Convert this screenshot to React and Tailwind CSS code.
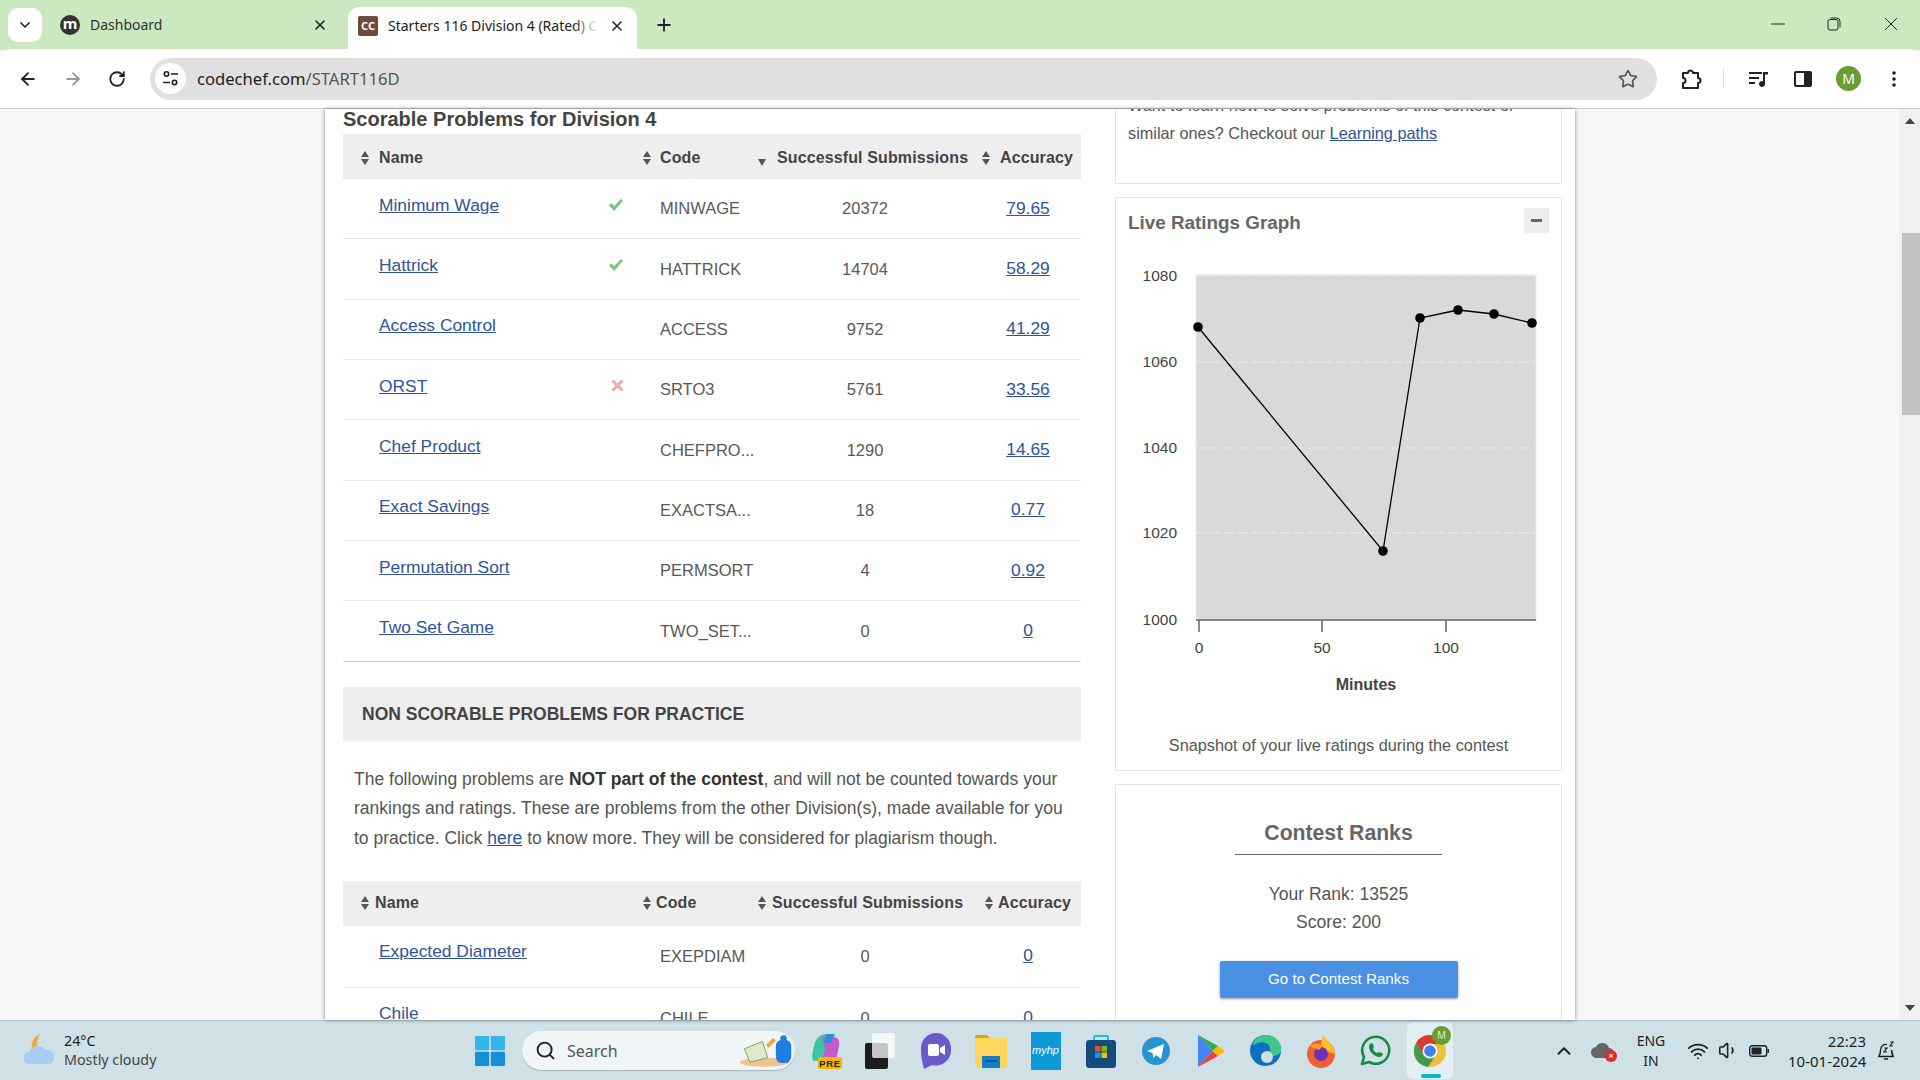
import {
  ArrowLeft, ArrowRight, RotateCw, Star, X, Plus, ChevronDown, ChevronUp, Search, Wifi, Volume1,
} from 'lucide-react'

const font = { sys: 'font-["Noto_Sans",sans-serif]' }

const scorable = [
  { name: 'Minimum Wage', status: 'ok', code: 'MINWAGE', subs: '20372', acc: '79.65' },
  { name: 'Hattrick', status: 'ok', code: 'HATTRICK', subs: '14704', acc: '58.29' },
  { name: 'Access Control', code: 'ACCESS', subs: '9752', acc: '41.29' },
  { name: 'ORST', status: 'bad', code: 'SRTO3', subs: '5761', acc: '33.56' },
  { name: 'Chef Product', code: 'CHEFPRO...', subs: '1290', acc: '14.65' },
  { name: 'Exact Savings', code: 'EXACTSA...', subs: '18', acc: '0.77' },
  { name: 'Permutation Sort', code: 'PERMSORT', subs: '4', acc: '0.92' },
  { name: 'Two Set Game', code: 'TWO_SET...', subs: '0', acc: '0' },
]

const practice = [
  { name: 'Expected Diameter', code: 'EXEPDIAM', subs: '0', acc: '0' },
  { name: 'Chile', code: 'CHILE', subs: '0', acc: '0' },
]

function SortIcon({ down }) {
  if (down) {
    return (
      <svg width="8" height="8" viewBox="0 0 8 8" className="mt-[7px] shrink-0">
        <path d="M0 1h8L4 8z" fill="#555" />
      </svg>
    )
  }
  return (
    <svg width="8" height="14" viewBox="0 0 8 14" className="shrink-0">
      <path d="M4 0l4 6H0zM4 14L0 8h8z" fill="#555" />
    </svg>
  )
}

function Status({ status }) {
  if (status === 'ok') {
    return (
      <svg width="16" height="14" viewBox="0 0 16 14">
        <path d="M1 7.500l2.500-2.200 2.600 3L12.800 1 15 2.800 6.200 13z" fill="#7cc47f" />
      </svg>
    )
  }
  if (status === 'bad') {
    return (
      <svg width="13" height="13" viewBox="0 0 13 13">
        <path d="M1.500 1.500l10 10M11.500 1.500l-10 10" stroke="#efa7a7" strokeWidth="3" />
      </svg>
    )
  }
  return null
}

function HeaderCell({ className, down, children, gap }) {
  return (
    <div className={`flex items-center whitespace-nowrap ${className}`}>
      <SortIcon down={down} />
      <span className={gap}>{children}</span>
    </div>
  )
}

function Row({ p, tall }) {
  return (
    <div className={`flex items-center border-b border-[#e8e8e8] text-[16.5px] text-[#595959] ${tall ? 'h-[62px]' : 'h-[60.35px]'}`}>
      <div className={`w-[297px] pl-[36px] pr-[16px] flex items-center justify-between text-[17.4px] ${tall ? 'pb-[10px]' : 'pb-[8px]'}`}>
        <a className="underline text-[#2f5597]">{p.name}</a>
        <Status status={p.status} />
      </div>
      <div className="w-[115px] pl-[20px] whitespace-nowrap">{p.code}</div>
      <div className="w-[220px] text-center">{p.subs}</div>
      <div className="w-[106px] text-center text-[17.4px] pb-[2px]">
        <a className="underline text-[#2f5597]">{p.acc}</a>
      </div>
    </div>
  )
}

function ProblemsColumn() {
  return (
    <div className="w-[738px] shrink-0 font-['Liberation_Sans',sans-serif]">
      <h2 className="h-[25px] text-[20px] leading-[21px] font-bold text-[#444]">Scorable Problems for Division 4</h2>

      <div className="flex items-center h-[45px] pt-[3px] bg-[#eeeeee] text-[16px] font-bold text-[#444] tracking-[0.12px]">
        <HeaderCell className="w-[297px] pl-[18px]" gap="ml-[10px]">Name</HeaderCell>
        <HeaderCell className="w-[115px] pl-[3px]" gap="ml-[9px]">Code</HeaderCell>
        <HeaderCell className="w-[220px] pl-[3px]" down gap="ml-[11px]">Successful Submissions</HeaderCell>
        <HeaderCell className="w-[106px] pl-[7px]" gap="ml-[10px]">Accuracy</HeaderCell>
      </div>
      {scorable.map((p) => <Row key={p.name} p={p} />)}
      <div className="h-px -mt-px bg-[#cccccc]" />

      <div className="mt-[25px] h-[54px] flex items-center pl-[19px] bg-[#eeeeee] text-[17.5px] font-bold text-[#444]">
        NON SCORABLE PROBLEMS FOR PRACTICE
      </div>

      <p className="mt-[24px] pl-[11px] text-[17.5px] leading-[29.7px] text-[#555] whitespace-nowrap">
        The following problems are <b className="text-[#333]">NOT part of the contest</b>, and will not be counted towards your<br />
        rankings and ratings. These are problems from the other Division(s), made available for you<br />
        to practice. Click <a className="underline text-[#2f5597]">here</a> to know more. They will be considered for plagiarism though.
      </p>

      <div className="mt-[27px] flex items-center h-[45px] bg-[#eeeeee] text-[16px] font-bold text-[#444] tracking-[0.12px]">
        <HeaderCell className="w-[297px] pl-[18px]" gap="ml-[6px]">Name</HeaderCell>
        <HeaderCell className="w-[115px] pl-[3px]" gap="ml-[5px]">Code</HeaderCell>
        <HeaderCell className="w-[220px] pl-[3px]" gap="ml-[6px]">Successful Submissions</HeaderCell>
        <HeaderCell className="w-[106px] pl-[10px]" gap="ml-[5px]">Accuracy</HeaderCell>
      </div>
      {practice.map((p) => <Row key={p.name} p={p} tall />)}
    </div>
  )
}

function RatingsChart() {
  const pts = [[1198, 327], [1383, 551], [1420, 318], [1458, 310], [1494, 314], [1532, 323]]
  const grid = [275, 362, 448, 533]
  const yLabels = [['1080', 276], ['1060', 362], ['1040', 448], ['1020', 533], ['1000', 620]]
  const xLabels = [['0', 1199], ['50', 1322], ['100', 1446]]
  return (
    <svg width="445" height="450" viewBox="1116 245 445 450" className="block">
      <rect x="1196" y="275" width="340" height="345" fill="#d9d9d9" stroke="#ececec" />
      {grid.map((y) => (
        <line key={y} x1="1196" x2="1536" y1={y} y2={y} stroke="#ececec" strokeWidth={y === 275 ? 2 : 1} strokeDasharray="10 4" />
      ))}
      <line x1="1196" x2="1536" y1="620" y2="620" stroke="#666" strokeWidth="1.500" />
      {xLabels.map(([t, x]) => <line key={t} x1={x} x2={x} y1="620" y2="632" stroke="#666" strokeWidth="1.500" />)}
      <polyline points={pts.map((p) => p.join(',')).join(' ')} fill="none" stroke="#000" strokeWidth="1.300" />
      {pts.map(([x, y]) => <circle key={x} cx={x} cy={y} r="4.800" fill="#000" />)}
      <g fontFamily="Liberation Sans, sans-serif" fontSize="15.500" fill="#444">
        {yLabels.map(([t, y]) => <text key={t} x="1177" y={y + 5} textAnchor="end">{t}</text>)}
        {xLabels.map(([t, x]) => <text key={t} x={x} y="653" textAnchor="middle">{t}</text>)}
        <text x="1366" y="690" textAnchor="middle" fontWeight="700" fontSize="16">Minutes</text>
      </g>
    </svg>
  )
}

function SideColumn() {
  return (
    <div className="w-[447px] shrink-0 ml-[34px] font-['Liberation_Sans',sans-serif] text-[#555]">
      <div className="-mt-[19px] h-[94px] border border-[#e6e6e6] pl-[12px] text-[16.27px] leading-[28px] whitespace-nowrap">
        Want to learn how to solve problems of this contest or<br />
        similar ones? Checkout our <a className="underline text-[#2f5597]">Learning paths</a>
      </div>

      <div className="mt-[13px] h-[574px] border border-[#e6e6e6]">
        <div className="h-[47px] flex items-start pl-[12px] pr-[12px] pt-[10px]">
          <h3 className="flex-1 text-[18.85px] leading-[30px] font-bold text-[#666]">Live Ratings Graph</h3>
          <button className="w-[25px] h-[25px] bg-[#eeeeee] flex items-center justify-center">
            <span className="w-[11px] h-[2.500px] bg-[#666]" />
          </button>
        </div>
        <RatingsChart />
        <p className="mt-[38px] text-center text-[16.3px] leading-[24px]">Snapshot of your live ratings during the contest</p>
      </div>

      <div className="mt-[13px] h-[300px] border border-[#e6e6e6] flex flex-col items-center pt-[33px]">
        <h3 className="w-[207px] pb-[6px] border-b border-[#666] text-center text-[21.2px] leading-[30px] font-bold text-[#666]">Contest Ranks</h3>
        <p className="mt-[25px] text-[17.55px] leading-[28px] text-center">Your Rank: 13525<br />Score: 200</p>
        <button className="mt-[25px] w-[238px] h-[37px] rounded-[2px] bg-[#4a90e2] text-white text-[15.2px] shadow-[0_1px_3px_rgba(0,0,0,0.4)]">Go to Contest Ranks</button>
      </div>
    </div>
  )
}

function Tabs() {
  return (
    <div className={`h-[50px] bg-[#cce8c0] flex items-end ${font.sys} text-[14px] text-[#333]`}>
      <div className="self-start mt-[8px] ml-[8px] w-[34px] h-[34px] rounded-[10px] bg-white flex items-center justify-center">
        <ChevronDown size={16} strokeWidth={2.500} color="#222" />
      </div>
      <div className="h-[50px] w-[306px] shrink-0 flex items-center pb-[1px] pl-[18px] pr-[20px]">
        <span className="w-[20px] h-[20px] rounded-full bg-[#333] text-white text-[15px] leading-[17px] font-bold text-center">m</span>
        <span className="ml-[10px] flex-1">Dashboard</span>
        <X size={16} strokeWidth={2.400} color="#222" />
      </div>
      <div className="h-[43px] w-[289px] shrink-0 rounded-t-[12px] bg-white flex items-center pl-[10px] pr-[12px] pb-[6px]">
        <span className="w-[20px] h-[20px] rounded-[2px] bg-[#6b4c38] text-white text-[11px] leading-[20px] font-bold text-center">CC</span>
        <span className="ml-[10px] w-[210px] relative overflow-hidden whitespace-nowrap text-[#222]">
          Starters 116 Division 4 (Rated) C
          <span className="absolute right-0 top-0 bottom-0 w-[24px] bg-gradient-to-r from-transparent to-white" />
        </span>
        <X size={16} strokeWidth={2.400} color="#222" className="ml-auto" />
      </div>
      <div className="self-start mt-[15px] ml-[17px]"><Plus size={20} strokeWidth={2.200} color="#222" /></div>
      <div className="flex-1" />
      <div className="self-start mt-[17px] flex items-center text-[#222]">
        <div className="w-[56px] flex justify-center">
          <svg width="14" height="14" viewBox="0 0 14 14"><path d="M0 7h14" stroke="#222" /></svg>
        </div>
        <div className="w-[56px] flex justify-center">
          <svg width="14" height="14" viewBox="0 0 14 14" fill="none" stroke="#222"><rect x="1" y="2.500" width="10" height="10.500" rx="2" /><path d="M3.500 1h6a3.500 3.500 0 0 1 3.500 3.500v6" /></svg>
        </div>
        <div className="w-[58px] flex justify-center">
          <svg width="14" height="14" viewBox="0 0 14 14"><path d="M1 1l12 12M13 1L1 13" stroke="#222" /></svg>
        </div>
      </div>
    </div>
  )
}

function Toolbar() {
  return (
    <div className={`h-[60px] bg-white border-b border-[#c9c9c9] rounded-t-[10px] -mt-px flex items-center ${font.sys}`}>
      <div className="w-[150px] shrink-0 flex items-center pl-[18px] gap-[25px]">
        <ArrowLeft size={20} strokeWidth={2.200} color="#222" />
        <ArrowRight size={20} strokeWidth={2.200} color="#999" />
        <RotateCw size={18} strokeWidth={2.400} color="#222" />
      </div>
      <div className="w-[1507px] h-[42px] rounded-full bg-[#e0e0e0] flex items-center pl-[5px] pr-[19px]">
        <span className="w-[31px] h-[31px] rounded-full bg-white flex items-center justify-center">
          <svg width="17" height="17" viewBox="0 0 17 17" fill="none" stroke="#222" strokeWidth="1.600">
            <circle cx="4.500" cy="4" r="2.200" /><path d="M9 4h7M1 12.500h7" /><circle cx="12.500" cy="12.500" r="2.200" />
          </svg>
        </span>
        <span className="ml-[11px] pt-[2px] flex-1 text-[16.6px] text-[#222]">codechef.com<span className="text-[#555]">/START116D</span></span>
        <Star size={20} strokeWidth={2} color="#555" />
      </div>
      <div className="flex-1 flex items-center pl-[23px]">
        <svg width="22" height="22" viewBox="0 0 22 22" fill="none" stroke="#222" strokeWidth="2" strokeLinejoin="round">
          <path d="M3 5h5a2.500 2.500 0 0 1 5 0h5v5a2.500 2.500 0 0 1 0 5v5H3v-5a2.500 2.500 0 0 0 0-5z" />
        </svg>
        <span className="ml-[21px] w-px h-[19px] bg-[#cce8c0]" />
        <svg width="22" height="20" viewBox="0 0 22 20" className="ml-[24px]" fill="#222">
          <path d="M1 3h13v2H1zM1 8h10v2H1zM1 13h6v2H1z" /><path d="M15 3h5v2.500h-3V15a3 3 0 1 1-2-2.800z" />
        </svg>
        <svg width="20" height="20" viewBox="0 0 20 20" className="ml-[23px]">
          <rect x="1" y="2" width="18" height="16" rx="2" fill="#222" /><rect x="3" y="4" width="8" height="12" fill="#fff" />
        </svg>
        <span className="ml-[23px] w-[25px] h-[25px] rounded-full bg-[#6a9c32] text-white text-[14px] leading-[25px] text-center">M</span>
        <svg width="4" height="18" viewBox="0 0 4 18" className="ml-[31px]" fill="#222">
          <circle cx="2" cy="3" r="1.800" /><circle cx="2" cy="9" r="1.800" /><circle cx="2" cy="15" r="1.800" />
        </svg>
      </div>
    </div>
  )
}

function Scrollbar() {
  return (
    <div className="w-[21px] shrink-0 bg-[#f0f0f0] flex flex-col items-center">
      <svg width="10" height="6" viewBox="0 0 10 6" className="mt-[9px] shrink-0"><path d="M5 0l5 6H0z" fill="#444" /></svg>
      <div className="mt-[109px] self-end w-[18px] h-[182px] bg-[#c1c1c1]" />
      <div className="flex-1" />
      <svg width="10" height="6" viewBox="0 0 10 6" className="mb-[9px] shrink-0"><path d="M0 0h10L5 6z" fill="#444" /></svg>
    </div>
  )
}

const taskIcons = [
  <svg key="copilot" width="32" height="38" viewBox="0 0 32 38">
    <path d="M4 14C6 4 12 2 18 2h7L21 20c-1 6-4 9-10 9H5C1 29 2 22 4 14z" fill="#3ec3a8" />
    <path d="M12 5h10c6 0 8 3 7 9l-2 10c-1 4-5 5-9 5h-6l3-12z" fill="#c35ac9" />
    <path d="M17 2h7l-3 9h-7z" fill="#2a8fe0" />
    <rect x="8" y="25" width="24" height="12" rx="2" fill="#f5b800" />
    <text x="20" y="34.500" textAnchor="middle" fontSize="9.500" fontWeight="700" fontFamily="Liberation Sans, sans-serif" letterSpacing="0.600" fill="#222">PRE</text>
  </svg>,
  <svg key="taskview" width="32" height="36" viewBox="0 0 32 36">
    <rect x="0" y="10" width="23" height="26" rx="2" fill="#1d1d1d" />
    <rect x="7" y="0" width="23" height="25" rx="2" fill="#ffffff" opacity="0.750" />
  </svg>,
  <svg key="meet" width="30" height="36" viewBox="0 0 30 36">
    <path d="M15 0a15 15 0 0 1 15 15v3A15 15 0 0 1 11 32L3 36c-2-8-3-12-3-20A15 15 0 0 1 15 0z" fill="#6a5bc9" />
    <rect x="7" y="11" width="11" height="12" rx="2" fill="#fff" />
    <path d="M19 15l5-3v10l-5-3z" fill="#fff" />
  </svg>,
  <svg key="folder" width="32" height="34" viewBox="0 0 32 34">
    <path d="M0 3a2 2 0 0 1 2-2h10l3 3H0z" fill="#e2a400" /><rect y="4" width="32" height="30" rx="1" fill="#ffd65c" />
    <rect x="7" y="22" width="18" height="12" fill="#1280c9" /><rect x="10" y="26" width="12" height="2" fill="#0b4f86" />
  </svg>,
  <span key="myhp" className="w-[30px] h-[38px] bg-[#0f97d6] flex items-center justify-center text-white text-[11px] italic font-['Liberation_Sans',sans-serif]">myhp</span>,
  <svg key="store" width="30" height="34" viewBox="0 0 30 34">
    <path d="M8 6V3a1 1 0 0 1 1-1h12a1 1 0 0 1 1 1v3" fill="none" stroke="#27b5e6" strokeWidth="2" />
    <rect y="6" width="30" height="28" rx="3" fill="#144a7c" />
    <rect x="9" y="12" width="5.500" height="5.500" fill="#f25022" /><rect x="15.500" y="12" width="5.500" height="5.500" fill="#7fba00" />
    <rect x="9" y="18.500" width="5.500" height="5.500" fill="#00a4ef" /><rect x="15.500" y="18.500" width="5.500" height="5.500" fill="#ffb900" />
  </svg>,
  <svg key="telegram" width="28" height="28" viewBox="0 0 28 28">
    <circle cx="14" cy="14" r="14" fill="#2794cf" />
    <path d="M5 14l17-7-3 15-5-4-2.500 3-1-5z" fill="#fff" />
  </svg>,
  <svg key="play" width="28" height="34" viewBox="0 0 28 34">
    <path d="M1 1v32l15-16z" fill="#4285f4" /><path d="M1 1l15 16 5-5z" fill="#34a853" />
    <path d="M1 33l15-16 5 5z" fill="#ea4335" /><path d="M21 12l7 5-7 5-5-5z" fill="#fbbc04" />
  </svg>,
  <svg key="edge" width="31" height="31" viewBox="0 0 31 31">
    <circle cx="15.500" cy="15.500" r="15.500" fill="#0f70c0" />
    <path d="M2 10C5 3 11 0 16 0c9 0 15 6 15 14 0 5-4 7-8 7-3 0-5-1-6-2 3-1 4-3 3-6-1-5-7-7-12-5-3 1-5 2-6 2z" fill="#3ec68c" />
    <circle cx="17" cy="22" r="6" fill="#cfe0e7" />
  </svg>,
  <svg key="firefox" width="28" height="34" viewBox="0 0 28 34">
    <circle cx="14" cy="20" r="14" fill="#f2602f" />
    <path d="M16 0c1 5 8 8 11 15l1 5-10-3-4-7z" fill="#ffbd2e" />
    <circle cx="14" cy="20" r="7" fill="#6b33b5" /><path d="M2 12c5-3 10-3 14 0l-4 4z" fill="#ff9a2e" />
  </svg>,
  <svg key="whatsapp" width="31" height="31" viewBox="0 0 31 31" fill="none">
    <path d="M2 29l2-7a13.500 13.500 0 1 1 5 5z" stroke="#1a8a4b" strokeWidth="2.600" strokeLinejoin="round" />
    <path d="M10 9c1-1 2-1 3 0l1 3-1 2c1 2 2 3 4 4l2-1 3 1c1 1 1 2 0 3-2 2-5 1-8-1s-5-5-5-8c0-1 0-2 1-3z" fill="#1a8a4b" />
  </svg>,
]

function ChromeIcon() {
  return (
    <svg width="32" height="32" viewBox="0 0 32 32">
      <circle cx="16" cy="16" r="16" fill="#e9c23c" />
      <path d="M16 0a16 16 0 0 0-13.900 8L9 20 16 9h13.900A16 16 0 0 0 16 0z" fill="#d93a30" />
      <path d="M2.100 8A16 16 0 0 0 14 32l7-11-12-1z" fill="#3f9c4c" />
      <circle cx="16" cy="16" r="7.500" fill="#fff" />
      <circle cx="16" cy="16" r="5.800" fill="#3f7ee8" />
    </svg>
  )
}

function WeatherIcon() {
  return (
    <svg width="32" height="34" viewBox="0 0 32 34">
      <path d="M16 0a12 12 0 0 0-8 14 12 12 0 0 0 10 4C12 14 12 7 16 0z" fill="#efa92f" />
      <path d="M6 30a6 6 0 0 1-1-12 9 9 0 0 1 16-2 7 7 0 0 1 4 14z" fill="#a9cdf0" />
    </svg>
  )
}

function Taskbar() {
  return (
    <div className={`h-[60px] shrink-0 bg-[#cfe1e7] border-t border-[#b6c7cf] flex items-center ${font.sys} text-[#222]`}>
      <div className="w-[475px] shrink-0 flex items-center pl-[24px]">
        <WeatherIcon />
        <div className="ml-[8px] pb-[2px] text-[14.3px] leading-[19px]">
          <div>24°C</div>
          <div className="text-[#444]">Mostly cloudy</div>
        </div>
      </div>
      <svg width="30" height="30" viewBox="0 0 30 30" className="shrink-0">
        <rect width="14.200" height="14.200" rx="1" fill="#35b4ec" /><rect x="15.800" width="14.200" height="14.200" rx="1" fill="#35b4ec" />
        <rect y="15.800" width="14.200" height="14.200" rx="1" fill="#1590d8" /><rect x="15.800" y="15.800" width="14.200" height="14.200" rx="1" fill="#1590d8" />
      </svg>
      <div className="ml-[17px] w-[273px] h-[39px] shrink-0 rounded-full bg-[#f0f5f8] shadow-[0_1px_1px_rgba(0,0,0,0.2)] flex items-center pl-[13px] pr-[2px]">
        <Search size={21} strokeWidth={2.200} color="#222" />
        <span className="ml-[11px] flex-1 text-[16px] text-[#555]">Search</span>
        <svg width="54" height="33" viewBox="0 0 60 36">
          <ellipse cx="28" cy="31" rx="27" ry="5" fill="#eec491" />
          <path d="M6 16l20-8 6 18-20 5z" fill="#dfeac9" stroke="#7c9a6a" />
          <path d="M30 12l8-8 3 3-8 8z" fill="#f1a23a" />
          <rect x="41" y="6" width="17" height="26" rx="7" fill="#1f7fe0" /><rect x="46" y="1" width="7" height="7" rx="3" fill="#1f7fe0" />
        </svg>
      </div>
      <div className="ml-[3px] flex items-center">
        {taskIcons.map((icon) => (
          <div key={icon.key} className="w-[55px] flex justify-center shrink-0">{icon}</div>
        ))}
        <div className="ml-[4px] w-[46px] h-[56px] rounded-[5px] bg-[#e4eff3] relative flex items-center justify-center shrink-0">
          <ChromeIcon />
          <span className="absolute top-[3px] right-[2px] w-[19px] h-[19px] rounded-full bg-[#6a9c32] text-[#dfe9c9] text-[10px] leading-[19px] text-center">M</span>
          <span className="absolute bottom-[1px] left-[14px] w-[20px] h-[4px] rounded-full bg-[#12b5c4]" />
        </div>
      </div>
      <div className="flex-1 flex items-center pl-[100px]">
        <ChevronUp size={22} strokeWidth={2.200} color="#222" />
        <div className="ml-[16px] relative w-[24px] h-[20px]">
          <svg width="22" height="18" viewBox="0 0 22 18"><path d="M6 17a5.500 5.500 0 0 1-1-11 7 7 0 0 1 13 1 5 5 0 0 1 0 10z" fill="#666" /></svg>
          <span className="absolute -right-[2px] -bottom-[1px] w-[12px] h-[12px] rounded-full bg-[#e02b2b] text-white text-[9px] leading-[12px] text-center font-bold">×</span>
        </div>
        <div className="ml-[11px] w-[50px] text-center text-[14px] leading-[20px]">ENG<br />IN</div>
        <Wifi size={22} strokeWidth={2} color="#222" className="ml-[11px]" />
        <Volume1 size={21} strokeWidth={1.800} color="#222" className="ml-[9px]" />
        <svg width="20" height="12" viewBox="0 0 20 12" className="ml-[10px]">
          <rect x="0.700" y="0.700" width="17" height="10.600" rx="2.500" fill="none" stroke="#222" strokeWidth="1.400" />
          <rect x="2.500" y="2.500" width="10" height="7" rx="1" fill="#222" /><rect x="18.500" y="4" width="1.500" height="4" fill="#222" />
        </svg>
        <div className="ml-[19px] w-[78px] text-right text-[15px] leading-[20px] whitespace-nowrap">22:23<br />10-01-2024</div>
        <svg width="18" height="20" viewBox="0 0 18 20" fill="none" stroke="#222" strokeWidth="1.400" className="ml-[11px]">
          <path d="M2 15c1.500-2 1.500-4 1.500-6A5.500 5.500 0 0 1 10 3.500M14.500 9c0 2 0 4 1.500 6zM1 15.500h16M7 18h4" />
          <path d="M7 7h3l-3 4h3M13 1h3l-3 4h3" strokeWidth="1.200" />
        </svg>
      </div>
    </div>
  )
}

export default function App() {
  return (
    <div className="w-[1920px] h-[1080px] overflow-hidden flex flex-col bg-[#f7f7f7]">
      <Tabs />
      <Toolbar />
      <div className="flex-1 flex min-h-0">
        <div className="w-[325px] shrink-0" />
        <div className="w-[1250px] shrink-0 bg-white pl-[18px] flex overflow-hidden shadow-[0_0_4px_rgba(0,0,0,0.45)] relative">
          <ProblemsColumn />
          <SideColumn />
        </div>
        <div className="flex-1" />
        <Scrollbar />
      </div>
      <Taskbar />
    </div>
  )
}
